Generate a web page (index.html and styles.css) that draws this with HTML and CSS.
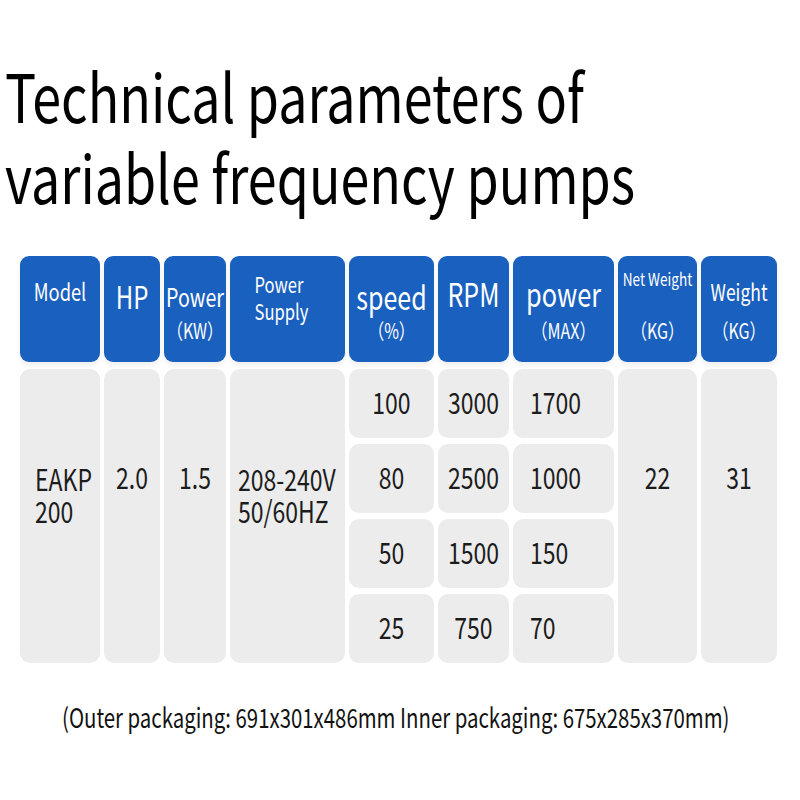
FILE: index.html
```html
<!DOCTYPE html>
<html lang="en">
<head>
<meta charset="utf-8">
<title>Technical parameters of variable frequency pumps</title>
<link rel="stylesheet" href="styles.css">
</head>
<body>
<div class="page">
  <h1 class="title">
    <span class="title-line">Technical parameters of</span>
    <span class="title-line">variable frequency pumps</span>
  </h1>

  <div class="table">
    <div class="thead">
      <div class="th"><div class="top"><span class="t h-model">Model</span></div></div>
      <div class="th"><div class="top"><span class="t h-hp">HP</span></div></div>
      <div class="th"><div class="top"><span class="t h-power">Power</span></div><div class="bot"><span class="t">（KW）</span></div></div>
      <div class="th"><div class="top"><span class="t h-supply">Power<br>Supply</span></div></div>
      <div class="th"><div class="top"><span class="t h-speed">speed</span></div><div class="bot"><span class="t">（%）</span></div></div>
      <div class="th"><div class="top"><span class="t h-rpm">RPM</span></div></div>
      <div class="th"><div class="top"><span class="t h-pmax">power</span></div><div class="bot"><span class="t">（MAX）</span></div></div>
      <div class="th"><div class="top top-up"><span class="t h-net">Net Weight</span></div><div class="bot"><span class="t">（KG）</span></div></div>
      <div class="th"><div class="top"><span class="t h-weight">Weight</span></div><div class="bot"><span class="t">（KG）</span></div></div>
    </div>

    <div class="tbody">
      <div class="td tall two left c1"><span class="t">EAKP<br>200</span></div>
      <div class="td tall one c2"><span class="t">2.0</span></div>
      <div class="td tall one c3"><span class="t">1.5</span></div>
      <div class="td tall two left-sm c4"><span class="t">208-240V<br>50/60HZ</span></div>

      <div class="td sub c5 r1"><span class="t">100</span></div>
      <div class="td sub c6 r1"><span class="t">3000</span></div>
      <div class="td sub sub-left c7 r1"><span class="t">1700</span></div>

      <div class="td sub c5 r2"><span class="t">80</span></div>
      <div class="td sub c6 r2"><span class="t">2500</span></div>
      <div class="td sub sub-left c7 r2"><span class="t">1000</span></div>

      <div class="td sub c5 r3"><span class="t">50</span></div>
      <div class="td sub c6 r3"><span class="t">1500</span></div>
      <div class="td sub sub-left c7 r3"><span class="t">150</span></div>

      <div class="td sub c5 r4"><span class="t">25</span></div>
      <div class="td sub c6 r4"><span class="t">750</span></div>
      <div class="td sub sub-left c7 r4"><span class="t">70</span></div>

      <div class="td tall one c8"><span class="t">22</span></div>
      <div class="td tall one c9"><span class="t">31</span></div>
    </div>
  </div>

  <p class="note"><span class="t">(Outer packaging: 691x301x486mm Inner packaging: 675x285x370mm)</span></p>
</div>
</body>
</html>
```

FILE: styles.css
```css
html, body {
  margin: 0;
  padding: 0;
  background: #ffffff;
}

body {
  font-family: "Noto Sans CJK SC", "Source Sans Pro", "Noto Sans", sans-serif;
  color: #1c1c1c;
}

.page {
  width: 800px;
  height: 800px;
  padding-top: 54px;
  box-sizing: border-box;
  overflow: hidden;
}

/* ---------- Title ---------- */
.title {
  margin: 0 0 0 5px;
  height: 126.6px;
  font-weight: 400;
  font-size: 52px;
  line-height: 63.3px;
  color: #000;
  transform: scaleY(1.28);
  transform-origin: 0 0;
}

.title-line {
  display: block;
  white-space: nowrap;
}

/* text is vertically stretched like the original artwork */
.t {
  display: inline-block;
  transform: scaleY(1.3);
  white-space: nowrap;
}

/* ---------- Table ---------- */
.table {
  margin: 75px 0 0 20px;
}

.thead,
.tbody {
  display: grid;
  grid-template-columns: 80px 56px 62px 115px 85px 71px 101px 79px 76px;
  column-gap: 4px;
}

.thead {
  height: 106px;
}

.th {
  background: #1a60bf;
  border-radius: 9px;
  color: #ffffff;
  display: flex;
  flex-direction: column;
  align-items: center;
  padding-top: 12px;
  box-sizing: border-box;
  box-shadow: 0 4px 5px rgba(0, 0, 0, 0.06);
}

.top {
  height: 56px;
  display: flex;
  align-items: center;
  justify-content: center;
  text-align: center;
}

.top-up {
  align-items: flex-start;
  padding-top: 1px;
  box-sizing: border-box;
}

.bot {
  height: 16px;
  margin-top: -2px;
  line-height: 16px;
  font-size: 16px;
  display: flex;
  align-items: center;
  justify-content: center;
}

.h-model { font-size: 18.3px; margin-top: -10px; }
.h-hp { font-size: 24px; }
.h-power { font-size: 19.6px; }
.h-supply { font-size: 16.6px; line-height: 20.8px; margin-top: 4px; text-align: left; margin-left: -12px; }
.h-speed { font-size: 25px; }
.h-rpm { font-size: 25px; margin-top: -5px; }
.h-pmax { font-size: 25.3px; margin-top: -5px; }
.h-net { font-size: 13.6px; line-height: 18px; }
.h-weight { font-size: 17.5px; margin-top: -8px; }

.tbody {
  margin-top: 7px;
  grid-template-rows: repeat(4, 69px);
  row-gap: 6px;
  font-size: 23px;
  color: #1c1c1c;
}

.td {
  background: #ececec;
  border-radius: 10px;
}

.tall {
  grid-row: 1 / span 4;
  line-height: 25.4px;
  text-align: center;
  box-sizing: border-box;
}

.one { padding-top: 95.5px; }
.two { padding-top: 101.5px; }

.left {
  text-align: left;
  padding-left: 15px;
}

.left-sm {
  text-align: left;
  padding-left: 8px;
}

.sub {
  display: flex;
  align-items: center;
  justify-content: center;
  line-height: 25.4px;
  padding-bottom: 3px;
  box-sizing: border-box;
}

.sub-left {
  justify-content: flex-start;
  padding-left: 17px;
}

.c1 { grid-column: 1; }
.c2 { grid-column: 2; }
.c3 { grid-column: 3; }
.c4 { grid-column: 4; }
.c5 { grid-column: 5; }
.c6 { grid-column: 6; }
.c7 { grid-column: 7; }
.c8 { grid-column: 8; }
.c9 { grid-column: 9; }
.r1 { grid-row: 1; }
.r2 { grid-row: 2; }
.r3 { grid-row: 3; }
.r4 { grid-row: 4; }

/* ---------- Note ---------- */
.note {
  margin: 38px 0 0 62px;
  font-size: 20.4px;
  line-height: 30px;
  color: #111;
}
```
